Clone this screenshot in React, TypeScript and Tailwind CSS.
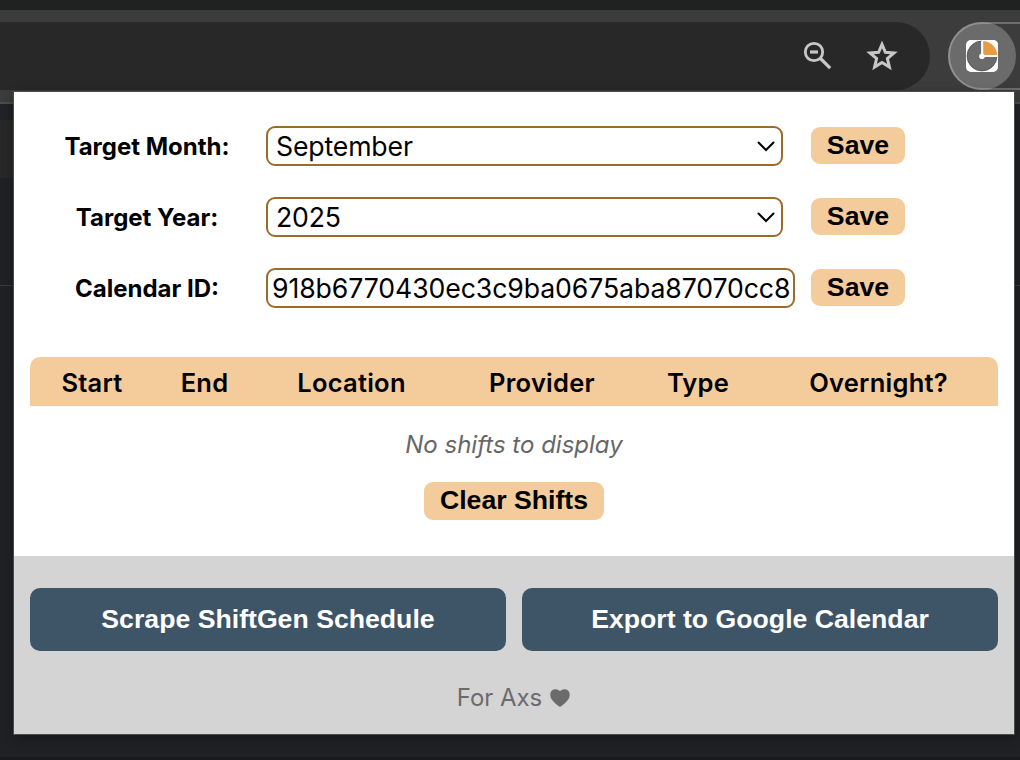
import type { ReactNode } from "react";

function ZoomOutIcon() {
  return (
    <svg width="30" height="30" viewBox="0 0 30 30" fill="none" stroke="#c7c7c7">
      <circle cx="11" cy="11" r="8.7" strokeWidth="2.8" />
      <path d="M7 11h8" strokeWidth="3.2" />
      <path d="M17 17l10.2 10.2" strokeWidth="3.2" />
    </svg>
  );
}

function StarIcon() {
  return (
    <svg width="32" height="32" viewBox="0 0 32 32" fill="none" stroke="#c7c7c7" strokeWidth="3">
      <path d="M16 4.300l3.400 8 8.600.7-6.600 5.600 2 8.400L16 22.500l-7.400 4.500 2-8.400L4 13l8.600-.7z" />
    </svg>
  );
}

function ClockIcon() {
  return (
    <svg width="32" height="32" viewBox="0 0 32 32">
      <rect width="32" height="32" rx="5" fill="#fff" />
      <circle cx="16" cy="16" r="14.9" fill="#6b6b6b" stroke="#585858" strokeWidth="1" />
      <path d="M16 16V0h11a5 5 0 0 1 5 5v11z" fill="#fff" />
      <path d="M17.200 14.900V1.100A14.800 14.800 0 0 1 31.200 14.900z" fill="#ea9a40" />
      <path d="M16 1v15h15.500" fill="none" stroke="#fff" strokeWidth="1.800" />
      <circle cx="16" cy="16.200" r="2.800" fill="#fff" />
    </svg>
  );
}

function Chevron() {
  return (
    <svg width="18" height="11" viewBox="0 0 18 11" fill="none" stroke="#000" strokeWidth="2" className="shrink-0">
      <path d="M1.500 1.500L9 9l7.500-7.500" strokeLinecap="round" strokeLinejoin="miter" />
    </svg>
  );
}

function PeachButton({ children, className }: { children: ReactNode; className: string }) {
  return (
    <button
      className={`flex items-start justify-center rounded-[9px] bg-[#f4cc9b] font-['Liberation_Sans',sans-serif] text-[26.67px] leading-[37px] font-bold whitespace-nowrap text-black ${className}`}
    >
      {children}
    </button>
  );
}

function FieldRow({ label, children }: { label: string; children: ReactNode }) {
  return (
    <div className="flex h-10 items-start">
      <div className="flex w-[252px] shrink-0 justify-center pt-px pl-[14px]">
        <span className="text-[24px] leading-10 font-bold whitespace-nowrap">{label}</span>
      </div>
      <div className="w-[545px]">{children}</div>
      <PeachButton className="mt-px h-[37px] w-[94px]">Save</PeachButton>
    </div>
  );
}

function SelectBox({ value }: { value: string }) {
  return (
    <div className="flex h-10 w-[517px] items-center justify-between rounded-[9px] border-2 border-[#9b6b29] bg-white pr-[6px] pl-2">
      <span className="text-[26.67px] tracking-[-0.16px]">{value}</span>
      <Chevron />
    </div>
  );
}

const columns = [
  { title: "Start", width: "w-[124px]" },
  { title: "End", width: "w-[101px]" },
  { title: "Location", width: "w-[193px]" },
  { title: "Provider", width: "w-[188px]" },
  { title: "Type", width: "w-[124px]" },
  { title: "Overnight?", width: "w-[237px]" },
];

function Popup() {
  return (
    <section className="absolute top-[92px] left-[14px] h-[642px] w-[1000px] bg-white text-black shadow-[0_0_0_1px_#4b4d4c,0_3px_10px_1px_rgba(0,0,0,0.35)]">
      <div className="flex h-[464px] flex-col">
        <div className="flex flex-col gap-[31px] pt-[34px]">
          <FieldRow label="Target Month:">
            <SelectBox value="September" />
          </FieldRow>
          <FieldRow label="Target Year:">
            <SelectBox value="2025" />
          </FieldRow>
          <FieldRow label="Calendar ID:">
            <div className="flex h-10 w-[529px] items-center overflow-hidden rounded-[9px] border-2 border-[#9b6b29] pl-1">
              <span className="text-[26.67px] tracking-[-0.1px] whitespace-nowrap">
                918b6770430ec3c9ba0675aba87070cc8
              </span>
            </div>
          </FieldRow>
        </div>
        <div className="mx-4 mt-[49px] flex h-[49px] items-center rounded-t-[10px] bg-[#f4cc9b] pt-[3px]">
          {columns.map((c) => (
            <div key={c.title} className={`flex shrink-0 justify-center text-[25.5px] font-semibold ${c.width}`}>
              <span className="tracking-[0.25px]">{c.title}</span>
            </div>
          ))}
        </div>
        <p className="mt-[23px] text-center text-[24px] leading-8 text-[#666] italic">No shifts to display</p>
        <div className="mt-[21px] flex justify-center">
          <PeachButton className="h-[38px] w-[180px]">Clear Shifts</PeachButton>
        </div>
      </div>
      <footer className="h-[178px] bg-[#d4d4d4] px-4 pt-8">
        <div className="grid grid-cols-2 gap-4">
          {["Scrape ShiftGen Schedule", "Export to Google Calendar"].map((t) => (
            <button
              key={t}
              className="h-[63px] rounded-[10px] bg-[#3e5467] pb-[2px] font-['Liberation_Sans',sans-serif] text-[26.67px] font-bold whitespace-nowrap text-white"
            >
              {t}
            </button>
          ))}
        </div>
        <p className="mt-[31px] flex items-center justify-center gap-2 pr-px text-[24px] leading-8 text-[#6b6b6b]">
          <span className="tracking-[-0.05px]">For Axs</span>
          <svg width="20" height="18" viewBox="0 0 20 18" fill="#6b6b6b">
            <path d="M10 18C5.500 14.600.3 11 .3 5.700.3 2.400 2.500.2 5.300.2 7.400.2 9 .9 10 2.300 11 .9 12.600.2 14.700.2c2.800 0 5 2.200 5 5.500C19.700 11 14.500 14.600 10 18z" />
          </svg>
        </p>
      </footer>
    </section>
  );
}

export default function App() {
  return (
    <main className="relative flex h-[760px] w-[1020px] flex-col overflow-hidden bg-[#202125] font-[Inter,sans-serif]">
      <div className="h-[10px] shrink-0 bg-[#1f2221]" />
      <header className="flex h-[94px] shrink-0 items-start border-b-2 border-[#4b4d4c] bg-[#3c3c3c] pt-3">
        <div className="flex h-[68px] w-[930px] shrink-0 items-center justify-end rounded-r-[34px] bg-[#282828]">
          <div className="mr-[33px] h-[30px]">
            <ZoomOutIcon />
          </div>
          <div className="mr-8 h-[33px]">
            <StarIcon />
          </div>
        </div>
        <div className="relative ml-[18px] h-[68px] w-[140px] shrink-0">
          <div className="flex size-[68px] items-center justify-center rounded-full bg-[#6b6b6b]">
            <ClockIcon />
          </div>
          <div className="absolute inset-0 rounded-full border-2 border-white/25" />
        </div>
      </header>
      <div className="h-4 shrink-0 bg-[#212328]" />
      <div className="flex h-[58px] shrink-0">
        <div className="w-[14px] bg-[#282828]" />
      </div>
      <div className="h-[107px] shrink-0" />
      <div className="h-px shrink-0 bg-[#3a3b3e]" />
      <div className="flex-1" />
      <div className="h-[3px] shrink-0 bg-[#1d181b]" />
      <Popup />
    </main>
  );
}
